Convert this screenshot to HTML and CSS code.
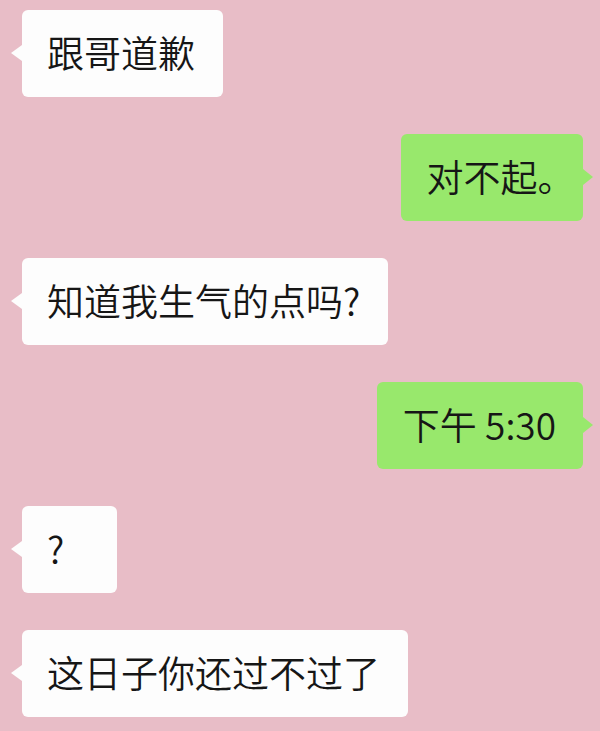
FILE: index.html
```html
<!DOCTYPE html>
<html lang="zh">
<head>
  <meta charset="UTF-8" />
  <title>聊天</title>
  <link rel="stylesheet" href="styles.css">
</head>
<body>
  <div class="chat">
    <div class="row left">
      <div class="bubble">跟哥道歉</div>
    </div>
    <div class="row right">
      <div class="bubble mine tight">对不起。</div>
    </div>
    <div class="row left">
      <div class="bubble">知道我生气的点吗?</div>
    </div>
    <div class="row right">
      <div class="bubble mine">下午 5:30</div>
    </div>
    <div class="row left">
      <div class="bubble">?</div>
    </div>
    <div class="row left">
      <div class="bubble">这日子你还过不过了</div>
    </div>
  </div>
</body>
</html>
```

FILE: styles.css
```css
body {
  margin: 0;
  background: #e8bdc7;
  font-family: "Noto Sans CJK SC", "Noto Sans", sans-serif;
  color: #161616;
}

.chat {
  display: flex;
  flex-direction: column;
  gap: 37px;
  padding: 10px 17px 0 22px;
}

.row {
  display: flex;
}

.row.left {
  justify-content: flex-start;
}

.row.right {
  justify-content: flex-end;
}

.bubble {
  position: relative;
  box-sizing: border-box;
  min-width: 95px;
  height: 87px;
  padding: 23px 28px 25px 25px;
  font-size: 37px;
  font-weight: 350;
  line-height: 39px;
  background: #fdfdfd;
  border-radius: 6px;
  white-space: nowrap;
}

/* little arrow pointing at the speaker */
.bubble::before {
  content: "";
  position: absolute;
  top: 35px;
  left: -11px;
  border-style: solid;
  border-width: 8px 11px 8px 0;
  border-color: transparent #fdfdfd transparent transparent;
}

.bubble.mine {
  background: #98e86c;
  padding: 23px 27px 25px 26px;
}

.bubble.mine::before {
  left: auto;
  right: -10px;
  border-width: 8px 0 8px 10px;
  border-color: transparent transparent transparent #98e86c;
}

/* half-width punctuation */
.bubble.tight {
  font-feature-settings: "halt";
}
```
